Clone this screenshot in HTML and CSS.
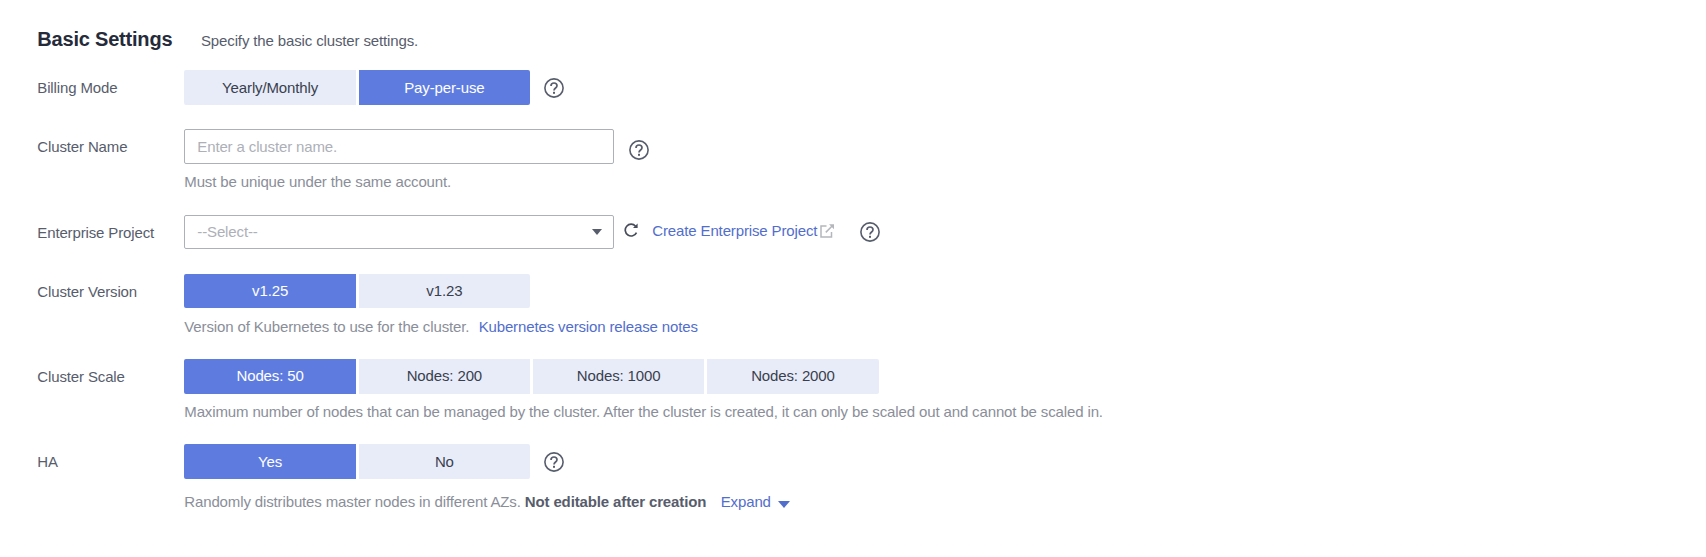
FILE: index.html
```html
<!DOCTYPE html>
<html lang="en">
<head>
<meta charset="utf-8">
<title>Basic Settings</title>
<link rel="stylesheet" href="styles.css">
</head>
<body>
<svg width="0" height="0" class="sprite" aria-hidden="true">
  <symbol id="help" viewBox="0 0 20 20">
    <circle cx="10" cy="10" r="9.1" fill="none" stroke="currentColor" stroke-width="1.6"/>
    <path d="M7 7.9C7 6 8.2 5 10 5s3 1 3 2.8c0 2.1-3 2.3-3 4.7" fill="none" stroke="currentColor" stroke-width="1.7"/>
    <rect x="9" y="13.8" width="2" height="2" fill="currentColor"/>
  </symbol>
</svg>
<main class="settings">
  <header class="heading">
    <h1 class="title">Basic Settings</h1>
    <p class="subtitle">Specify the basic cluster settings.</p>
  </header>

  <section class="row row-billing">
    <span class="label">Billing Mode</span>
    <div class="field">
      <div class="line">
        <div class="segments"><button class="segment">Yearly/Monthly</button><button class="segment selected">Pay-per-use</button></div>
        <svg class="help"><use href="#help"/></svg>
      </div>
    </div>
  </section>

  <section class="row row-name">
    <label class="label" for="name">Cluster Name</label>
    <div class="field">
      <div class="line">
        <input class="control" id="name" placeholder="Enter a cluster name.">
        <svg class="help help-low"><use href="#help"/></svg>
      </div>
      <p class="hint">Must be unique under the same account.</p>
    </div>
  </section>

  <section class="row row-project">
    <span class="label">Enterprise Project</span>
    <div class="field">
      <div class="line">
        <div class="control select"><span>--Select--</span><svg class="caret" viewBox="0 0 10 6"><path d="M0 0h10L5 6z" fill="currentColor"/></svg></div>
        <svg class="refresh" viewBox="0 0 14 14"><path d="M11.6 3.2A5.9 5.9 0 1 0 12.5 9.6" fill="none" stroke="currentColor" stroke-width="1.7"/><path d="M13.6.5v4.6H9z" fill="currentColor"/></svg>
        <a class="link create">Create Enterprise Project</a>
        <svg class="external" viewBox="0 0 14 14"><path d="M6.5 2H1V13H11.5V8" fill="none" stroke="currentColor" stroke-width="1.5"/><path d="M12.4 1.8L5.8 8.4" fill="none" stroke="currentColor" stroke-width="1.5"/><path d="M9 .2h5v5z" fill="currentColor"/></svg>
        <svg class="help help-project"><use href="#help"/></svg>
      </div>
    </div>
  </section>

  <section class="row row-version">
    <span class="label">Cluster Version</span>
    <div class="field">
      <div class="line">
        <div class="segments"><button class="segment selected">v1.25</button><button class="segment">v1.23</button></div>
      </div>
      <p class="hint">Version of Kubernetes to use for the cluster.<a class="link notes">Kubernetes version release notes</a></p>
    </div>
  </section>

  <section class="row row-scale">
    <span class="label">Cluster Scale</span>
    <div class="field">
      <div class="line">
        <div class="segments"><button class="segment selected">Nodes: 50</button><button class="segment">Nodes: 200</button><button class="segment">Nodes: 1000</button><button class="segment">Nodes: 2000</button></div>
      </div>
      <p class="hint">Maximum number of nodes that can be managed by the cluster. After the cluster is created, it can only be scaled out and cannot be scaled in.</p>
    </div>
  </section>

  <section class="row row-ha">
    <span class="label">HA</span>
    <div class="field">
      <div class="line">
        <div class="segments"><button class="segment selected">Yes</button><button class="segment">No</button></div>
        <svg class="help"><use href="#help"/></svg>
      </div>
      <p class="hint hint-ha">Randomly distributes master nodes in different AZs. <strong>Not editable after creation</strong><a class="link expand">Expand</a><svg class="expand-caret" viewBox="0 0 12 7"><path d="M0 0h12L6 7z" fill="currentColor"/></svg></p>
    </div>
  </section>
</main>
</body>
</html>
```
FILE: styles.css
```css
* { box-sizing: border-box; }

body {
  margin: 0;
  background: #fff;
  color: #575d6c;
  font: 15px/20px "Liberation Sans", Arial, sans-serif;
  letter-spacing: -0.133px;
}

h1, p { margin: 0; }

.sprite { display: block; }

.settings {
  padding: 27px 0 0 37.3px;
  white-space: nowrap;
}

.heading {
  display: flex;
  align-items: baseline;
  height: 43.4px;
}

.title {
  width: 163.7px;
  color: #252b3a;
  font-size: 20px;
  line-height: 24px;
  letter-spacing: -0.2px;
}

.row {
  display: grid;
  grid-template-columns: 147px 1fr;
}

.row-billing { height: 59px; }
.row-name { height: 85.5px; }
.row-project { height: 59px; }
.row-version { height: 85.3px; }
.row-scale { height: 85.2px; }

.label { line-height: 35px; }

.line {
  display: flex;
  align-items: center;
  height: 34.5px;
}

.segments {
  display: flex;
  gap: 2.7px;
  height: 100%;
  border-radius: 2px;
  overflow: hidden;
}

.segment {
  width: 171.6px;
  padding: 0;
  border: 0;
  background: #e8ecf9;
  color: #393f4e;
  font: inherit;
  letter-spacing: -0.133px;
}

.segment.selected {
  background: #5e7ce0;
  color: #fff;
}

.help {
  width: 20px;
  height: 20px;
  margin-left: 14.3px;
  color: #575d6c;
}

.help-low { margin-top: 6px; }

.control {
  width: 430px;
  height: 100%;
  padding: 0 11px 0 12px;
  border: 1px solid #adb0b8;
  border-radius: 2px;
  background: #fff;
  color: #adb0b8;
  font: inherit;
  letter-spacing: inherit;
}

.control::placeholder {
  color: #adb0b8;
  opacity: 1;
}

.select {
  display: flex;
  align-items: center;
  justify-content: space-between;
}

.caret {
  width: 10px;
  height: 6px;
  color: #575d6c;
}

.refresh {
  width: 14px;
  height: 14px;
  margin: 0 14.7px 5px 9.3px;
  color: #464c59;
}

.link { color: #526ecc; }

.create { margin-bottom: 3px; }

.external {
  width: 14px;
  height: 14px;
  margin: 0 0 3px 2.5px;
  color: #b4b6bb;
}

.help-project { margin-left: 26.5px; }

.hint {
  margin-top: 8.4px;
  color: #8a8e99;
}

.notes { margin-left: 9.3px; }

.hint-ha { margin-top: 13.3px; }

.hint-ha strong { color: #575d6c; }

.expand { margin-left: 14.5px; }

.expand-caret {
  width: 12px;
  height: 7px;
  margin-left: 7.2px;
  color: #526ecc;
  vertical-align: -1px;
}
```
